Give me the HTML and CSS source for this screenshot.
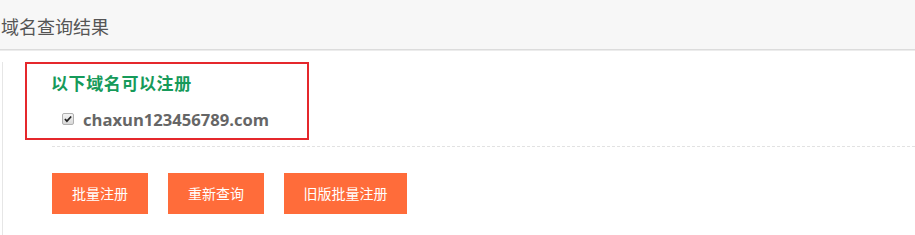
FILE: index.html
```html
<!DOCTYPE html>
<html lang="zh-CN">
<head>
    <meta charset="UTF-8">
    <meta name="viewport" content="width=device-width, initial-scale=1.0">
    <title>域名查询结果</title>
    <link rel="stylesheet" href="styles.css">
</head>
<body>
    <div class="page">
        <div class="page-title">域名查询结果</div>

        <div class="panel">
            <!-- 可注册域名 -->
            <div class="result-box">
                <div class="result-title">以下域名可以注册</div>
                <label class="domain-row">
                    <span class="fake-check">
                        <svg viewBox="0 0 12 12">
                            <path d="M2.3 6 L4.7 8.6 L9.8 3" />
                        </svg>
                    </span>
                    <span class="domain-name">chaxun123456789.com</span>
                </label>
            </div>

            <div class="dash-line"></div>

            <div class="btn-row">
                <a class="btn" href="#">批量注册</a>
                <a class="btn" href="#">重新查询</a>
                <a class="btn btn-wide" href="#">旧版批量注册</a>
            </div>
        </div>
    </div>
</body>
</html>
```

FILE: styles.css
```css
* {
    margin: 0;
    padding: 0;
    box-sizing: border-box;
}

body {
    font-family: "Noto Sans CJK SC", "Open Sans", sans-serif;
    background: #fff;
    color: #555;
}

.page {
    width: 915px;
    height: 235px;
    overflow: hidden;
}

.page-title {
    height: 50px;
    padding-top: 3px;
    line-height: 46px;
    padding-left: 1px;
    font-size: 18px;
    color: #555;
    background: #f7f7f7;
    border-bottom: 1px solid #dcdcdc;
    box-shadow: 0 1px 0 #ececec;
}

.panel {
    margin-left: 2px;
    padding-left: 22px;
    border-left: 1px solid #e6e6e6;
    height: 185px;
}

.result-box {
    margin-top: 12px;
    width: 284px;
    height: 78px;
    border: 2px solid #e5282c;
    padding: 9px 0 0 24px;
}

.result-title {
    font-size: 17px;
    font-weight: bold;
    line-height: 20px;
    letter-spacing: 0.6px;
    color: #169a5a;
}

.domain-row {
    display: flex;
    align-items: center;
    margin-top: 16px;
    height: 20px;
}

.fake-check {
    display: inline-block;
    width: 12px;
    height: 12px;
    margin-left: 11px;
    margin-right: 9px;
    border: 1px solid #b0b0b0;
    border-radius: 2px;
    background: linear-gradient(#f4f4f4, #d8d8d8);
}

.fake-check svg {
    display: block;
    width: 10px;
    height: 10px;
    fill: none;
    stroke: #222;
    stroke-width: 2;
}

.domain-name {
    font-family: "Open Sans", "Noto Sans CJK SC", sans-serif;
    font-size: 16.6px;
    font-weight: bold;
    color: #666;
}

.dash-line {
    margin-top: 6px;
    margin-left: 27px;
    border-top: 1px dashed #e2e2e2;
}

.btn-row {
    display: flex;
    gap: 20px;
    margin-top: 26px;
    margin-left: 27px;
}

.btn {
    display: block;
    width: 96px;
    height: 41px;
    line-height: 41px;
    text-align: center;
    font-size: 14px;
    color: #fff;
    text-decoration: none;
    background: #ff6c3a;
}

.btn-wide {
    width: 123px;
}
```
